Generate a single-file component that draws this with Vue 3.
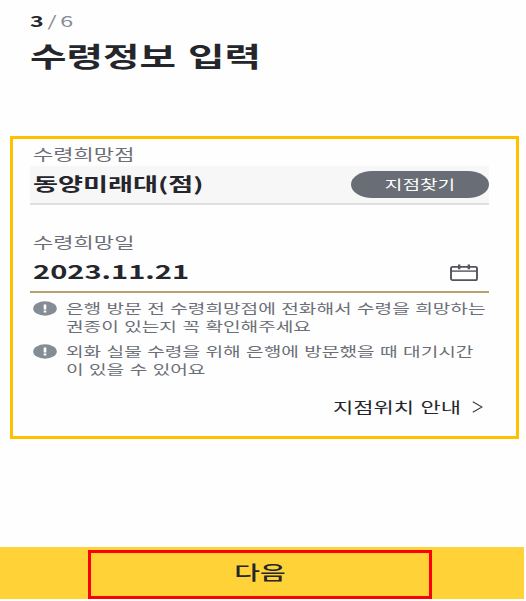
<template>
  <div class="page">
    <header class="header">
      <p class="step">
        <span class="wide"><b>3</b><i>/</i>6</span>
      </p>
      <h1 class="title"><span class="wide">수령정보 입력</span></h1>
    </header>

    <main class="panel">
      <div class="label"><span class="wide">수령희망점</span></div>
      <div class="field branch">
        <span class="wide value">동양미래대(점)</span>
        <button class="find" type="button"><span class="wide">지점찾기</span></button>
      </div>

      <div class="label second"><span class="wide">수령희망일</span></div>
      <div class="field date">
        <span class="wide value">2023.11.21</span>
        <svg class="calendar" width="28" height="18" viewBox="0 0 28 18" fill="none">
          <rect x="1" y="2.9" width="26" height="13.2" rx="1.6" stroke="#53545c" stroke-width="1.9" />
          <path d="M1 7.1h26" stroke="#53545c" stroke-width="1.4" />
          <path d="M9.2 .5v4.8M18.8 .5v4.8" stroke="#53545c" stroke-width="2.4" />
        </svg>
      </div>

      <ul class="notices">
        <li v-for="notice in notices" :key="notice[0]">
          <svg class="mark" width="24" height="15" viewBox="0 0 24 15">
            <ellipse cx="12" cy="7.5" rx="11.8" ry="7.2" fill="#848c95" />
            <path d="M12 3.5v5M12 9.6v1.8" stroke="#fff" stroke-width="2.6" />
          </svg>
          <p>
            <span v-for="line in notice" :key="line" class="wide">{{ line }}</span>
          </p>
        </li>
      </ul>

      <a class="guide">
        <span class="wide">지점위치 안내</span>
        <svg width="11" height="12" viewBox="0 0 11 12" fill="none">
          <path d="M.8 .8L10 6L.8 11.2" stroke="#3c3d42" stroke-width="1.2" />
        </svg>
      </a>
    </main>

    <footer class="footer">
      <button class="next" type="button"><span class="wide">다음</span></button>
    </footer>
  </div>
</template>

<script setup>
const notices = [
  ['은행 방문 전 수령희망점에 전화해서 수령을 희망하는', '권종이 있는지 꼭 확인해주세요'],
  ['외화 실물 수령을 위해 은행에 방문했을 때 대기시간', '이 있을 수 있어요']
]
</script>

<style>
body {
  margin: 0;
  background: #fefefe;
}
</style>

<style scoped>
.page {
  box-sizing: border-box;
  width: 526px;
  height: 601px;
  display: flex;
  flex-direction: column;
  overflow: hidden;
  color: #25262b;
  font-family: 'Noto Sans CJK KR', sans-serif;
}

p,
h1,
ul {
  margin: 0;
  padding: 0;
}

button {
  padding: 0;
  border: 0;
  font-family: inherit;
}

/* wide lettering */
.wide {
  display: block;
  white-space: nowrap;
  transform: scaleX(1.47);
  transform-origin: left center;
}

.header {
  height: 136px;
  padding-left: 30px;
  box-sizing: border-box;
}

.step {
  padding-top: 11px;
  font-size: 15px;
  line-height: 20px;
  color: #848c95;

  .wide {
    transform: scaleX(1.55);
  }
  i {
    margin: 0 2.4px;
    font-style: normal;
  }
  b {
    color: #25262b;
  }
}

.title {
  font-size: 27px;
  line-height: 50px;
  font-weight: 700;
  word-spacing: 2px;
}

.panel {
  box-sizing: border-box;
  width: 509px;
  height: 303px;
  margin-left: 10px;
  padding: 5px 27px 0 17px;
  border: 3px solid #ffc000;
}

.label {
  height: 22px;
  padding-left: 3px;
  font-size: 15px;
  line-height: 20px;
  color: #6b6e76;
}

.second {
  margin-top: 27px;
}

.field {
  box-sizing: border-box;
  display: flex;
  align-items: center;
  justify-content: space-between;
  height: 39px;
  padding-left: 3px;
  font-weight: 700;
}

.value {
  padding-bottom: 3px;
}

.branch {
  background: #f7f7f7;
  border-bottom: 2px solid #e0e0e0;
  font-size: 18px;

  .value {
    transform: scaleX(1.51);
  }
}

.date {
  padding-right: 11px;
  border-bottom: 2px solid #b9a16b;
  font-size: 19px;

  .value {
    padding-bottom: 5px;
    transform: scaleX(1.53);
  }
}

.find {
  width: 138px;
  height: 27px;
  border-radius: 22px / 14px;
  background: #696d76;
  color: #fff;
  font-size: 13px;
  line-height: 25px;

  .wide {
    padding-bottom: 3px;
    transform-origin: center;
  }
}

.notices {
  list-style: none;
  padding: 6px 0 0 3px;
  font-size: 13px;
  line-height: 18px;
  color: #6b6e76;
  word-spacing: 0.8px;

  li {
    display: flex;
    gap: 9px;
    height: 36px;
    margin-bottom: 7px;
  }
}

.mark {
  flex: none;
  margin-top: 2px;
}

.guide {
  display: flex;
  align-items: center;
  height: 24px;
  margin-top: 17px;
  padding-left: 303px;
  font-size: 15px;
  line-height: 24px;
  word-spacing: 1px;

  svg {
    margin-left: 52px;
  }
}

.footer {
  box-sizing: border-box;
  width: 524px;
  height: 52px;
  margin-top: 108px;
  padding: 3px 0 0 88px;
  background: #ffd237;
}

.next {
  box-sizing: border-box;
  width: 344px;
  height: 49px;
  border: 3px solid #f00;
  background: transparent;
  color: #25262b;
  font-size: 19px;
  font-weight: 500;

  .wide {
    padding-bottom: 6px;
    transform-origin: center;
  }
}
</style>
